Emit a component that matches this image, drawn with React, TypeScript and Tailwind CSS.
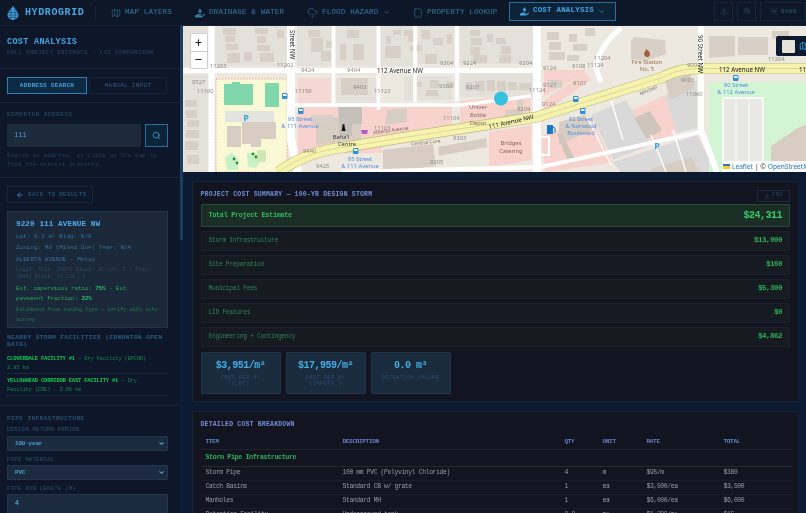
import type { ReactNode } from 'react';
import { ArrowLeft, ChevronDown, CloudDrizzle, Download, Map as MapIcon, Minus, Plus, Search, Sun, Tablet, ZoomIn } from 'lucide-react';
import { FaHandHoldingWater } from 'react-icons/fa';

const mono = 'font-["Liberation_Mono",monospace]';

function NavItem({ icon, label, chevron }: { icon: ReactNode; label: string; chevron?: boolean }) {
  return (
    <div className="flex items-center gap-[4px] text-[7.5px] tracking-[0.2px] text-[#367aa8]">
      {icon}
      <span>{label}</span>
      {chevron && <ChevronDown className="ml-[1px] size-[7px]" />}
    </div>
  );
}

function Header() {
  return (
    <header className="flex h-[26px] shrink-0 items-center bg-[#0d1727] border-b border-[#14233a]">
      <div className="flex w-[96px] shrink-0 items-center gap-[6px] pl-[7px] border-r border-[#14233a] h-[14px]">
        <svg viewBox="0 0 12 14" className="w-[12px] h-[14px]">
          <path d="M6 0 C8 3 11.5 6 11.5 9 A5.5 5 0 0 1 .5 9 C.5 6 4 3 6 0Z" fill="#3f9fdc" />
          <path d="M1 6.5H11M.5 9H11.5M1 11.5H11M4 3V14M8 3V14" stroke="#0d1727" strokeWidth=".4" />
        </svg>
        <span className="text-[10px] font-bold tracking-[0.6px] text-[#46a6e2]">HYDROGRID</span>
      </div>
      <div className="ml-[15px] w-[84px]"><NavItem icon={<MapIcon className="size-[10px]" strokeWidth={1.3} />} label="MAP LAYERS" /></div>
      <div className="w-[112px]"><NavItem icon={<FaHandHoldingWater className="size-[10px]" />} label="DRAINAGE & WATER" /></div>
      <div className="w-[106px]"><NavItem icon={<CloudDrizzle className="size-[11px]" strokeWidth={1.3} />} label="FLOOD HAZARD" chevron /></div>
      <div className="w-[96px]"><NavItem icon={<Tablet className="size-[10px]" strokeWidth={1.3} />} label="PROPERTY LOOKUP" /></div>
      <div className="flex h-[19px] w-[107px] items-center justify-center gap-[4px] border border-[#2a6f9e] bg-[#0d2338] text-[7.5px] font-bold tracking-[0.2px] text-[#46a6e2] mb-[3px]">
        <FaHandHoldingWater className="size-[9px]" />
        <span>COST ANALYSIS</span>
        <ChevronDown className="size-[7px]" />
      </div>
      <div className="ml-auto flex items-center gap-[4px] mb-[3px]">
        <div className="flex size-[19px] items-center justify-center border border-[#16253a] text-[#274a68]"><Download className="size-[8px]" /></div>
        <div className="flex size-[19px] items-center justify-center border border-[#16253a] text-[#274a68]"><ZoomIn className="size-[8px]" /></div>
        <div className="flex h-[19px] w-[46px] items-center gap-[3px] border border-[#16253a] pl-[9px] text-[6px] font-bold tracking-[0.4px] text-[#274a68]"><Sun className="size-[8px]" />DARK</div>
      </div>
    </header>
  );
}

function Label({ children, className = '' }: { children: ReactNode; className?: string }) {
  return <div className={`text-[5.8px] tracking-[0.15px] text-[#2a5070] ${className}`}>{children}</div>;
}

function Select({ value }: { value: string }) {
  return (
    <div className="flex h-[15px] items-center justify-between rounded-[1px] border border-[#22364d] bg-[#1b2a3e] pl-[7px] pr-[2px] text-[6px] tracking-[-0.2px] font-bold text-[#4a9fd8]">
      {value}
      <ChevronDown className="size-[7px]" strokeWidth={3.5} />
    </div>
  );
}

function Sidebar() {
  return (
    <aside className="flex w-[182.5px] shrink-0 bg-[#0d1729]">
      <div className="w-[180px] h-full overflow-hidden">
        <div className="h-[43px] border-b border-[#15263d] px-[7px] pt-[12px]">
          <div className="text-[8.5px] leading-[9px] font-bold tracking-[0.3px] text-[#46a6e2]">COST ANALYSIS</div>
          <div className="mt-[2px] text-[5.8px] leading-[7px] tracking-[0.38px] text-[#234668]">FULL PROJECT ESTIMATE · LID COMPARISON</div>
        </div>
        <div className="flex h-[34px] gap-[2px] border-b border-[#15263d] px-[7px] pt-[8px]">
          <div className="flex h-[17px] w-[80px] items-center justify-center border border-[#2f7fb2] bg-[#0d2a44] text-[6px] font-bold tracking-[0.28px] text-[#46a6e2]">ADDRESS SEARCH</div>
          <div className="flex h-[17px] w-[78px] items-center justify-center border border-[#14263c] text-[6px] tracking-[0.28px] text-[#2f5d84]">MANUAL INPUT</div>
        </div>
        <div className="h-[75px] border-b border-[#15263d] px-[7px] pt-[8px]">
          <Label className="h-[13px] leading-[7px] !text-[6px] !tracking-[0.5px]">EDMONTON ADDRESS</Label>
          <div className="flex gap-[4px]">
            <div className="flex h-[23px] w-[134px] items-center rounded-[1px] bg-[#1d2a3b] pl-[7px] text-[7px] text-[#4a9fd8]">111</div>
            <div className="flex h-[23px] w-[23px] items-center justify-center border border-[#2a6f9e] bg-[#0d2338] text-[#46a6e2]"><Search className="size-[9px]" /></div>
          </div>
          <div className="mt-[4px] text-[5.8px] leading-[9.4px] tracking-[0.18px] text-[#214260]">
            Search an address, or click on the map to<br />find the nearest property.
          </div>
        </div>
        <div className="pl-[7px] pr-[12px] pt-[8px]">
          <div className="flex h-[17px] w-[86px] items-center gap-[4px] border border-[#14263c] pl-[8px] text-[6px] tracking-[0.3px] text-[#2f5d84]">
            <ArrowLeft className="size-[8px] text-[#46a6e2]" />BACK TO RESULTS
          </div>
          <div className="mt-[8px] h-[117px] w-[161px] border border-[#22344b] bg-[#1b283a] pl-[8px] pr-[8px] pt-[7px]">
            <div className="text-[7.8px] leading-[10px] font-bold text-[#4dabe6]">9220 111 AVENUE NW</div>
            <div className="mt-[2px] text-[6px] leading-[11.4px] text-[#33719c]">
              <div>Lot: 6.2 m²  Bldg: N/A</div>
              <div>Zoning: MU (Mixed Use)  Year: N/A</div>
              <div>ALBERTA AVENUE · Métis</div>
            </div>
            <div className="mt-[2px] text-[5.5px] leading-[6.6px] tracking-[-0.16px] text-[#2f475f]">Legal: Plan: 2984J Block: 41 Lot: 5 / Plan:<br />2984J Block: 41 Lot: 6</div>
            <div className="mt-[4px] text-[6px] leading-[10px] tracking-[-0.16px] text-[#22a752]">
              Est. impervious ratio: <b className="text-[#27c45f]">75%</b> · Est.<br />pavement fraction: <b className="text-[#27c45f]">22%</b>
            </div>
            <div className="mt-[1px] text-[5.5px] leading-[9.4px] tracking-[-0.15px] text-[#1d7a42]">Estimated from zoning type — verify with site<br />survey</div>
          </div>
          <div className="mt-[6px] text-[6.2px] leading-[7.4px] font-bold tracking-[0.38px] text-[#2a5a85]">NEARBY STORM FACILITIES (EDMONTON OPEN<br />DATA)</div>
          <div className="mt-[5px] h-[20px] border-b border-[#15263d] text-[5.6px] leading-[9px] tracking-[-0.27px] text-[#13864a]">
            <b className="text-[#12c74f]">CLOVERDALE FACILITY #1</b> — Dry Facility (EPCOR) ·<br />2.85 km
          </div>
          <div className="mt-[2px] h-[20px] border-b border-[#15263d] text-[5.6px] leading-[9px] tracking-[-0.27px] text-[#13864a]">
            <b className="text-[#12c74f]">YELLOWHEAD CORRIDOR EAST FACILITY #1</b> — Dry<br />Facility (COE) · 3.66 km
          </div>
        </div>
        <div className="mt-[9px] border-t border-[#15263d] pl-[7px] pr-[12px] pt-[9px]">
          <div className="text-[6.2px] leading-[7px] tracking-[0.37px] text-[#2a5070] font-bold">PIPE INFRASTRUCTURE</div>
          <Label className="mt-[4px] h-[10px] leading-[7px]">DESIGN RETURN PERIOD</Label>
          <Select value="100-year" />
          <Label className="mt-[5px] h-[9px] leading-[7px]">PIPE MATERIAL</Label>
          <Select value="PVC" />
          <Label className="mt-[5px] h-[9px] leading-[7px]">PIPE RUN LENGTH (M)</Label>
          <div className="flex h-[21px] items-center rounded-[1px] border border-[#22364d] bg-[#1b2a3e] pl-[7px] text-[6.5px] font-bold text-[#4a9fd8]">4</div>
        </div>
      </div>
      <div className="relative w-[2.5px] bg-[#101e33]">
        <div className="h-[214px] bg-[#1b3d5e]" />
      </div>
    </aside>
  );
}

const greys = 'fill-[#e4e1db]';

const buildings: [number, number, number, number][] = [
  [184, 100, 12, 7], [185, 110, 11, 8], [186, 120, 12, 7], [185, 130, 13, 8], [184, 141, 13, 9], [186, 155, 12, 9],
  [222, 28, 13, 7], [224, 36, 10, 6], [225, 44, 12, 6], [226, 53, 13, 10], [243, 52, 8, 9],
  [254, 28, 13, 6], [256, 36, 9, 7], [256, 45, 13, 6], [259, 53, 14, 9], [276, 30, 7, 8],
  [307, 30, 12, 7], [310, 38, 12, 14], [320, 51, 10, 10], [325, 41, 6, 7], [339, 44, 6, 16], [352, 44, 11, 16], [346, 30, 12, 8],
  [385, 36, 5, 8], [384, 46, 16, 12], [403, 30, 10, 6], [407, 35, 7, 7], [409, 45, 12, 6], [392, 30, 8, 5],
  [469, 30, 10, 6], [470, 38, 11, 7], [469, 47, 10, 8], [472, 55, 14, 8], [486, 34, 6, 8], [495, 38, 10, 6], [500, 46, 10, 8], [498, 55, 12, 8],
  [420, 30, 9, 9], [432, 38, 10, 7], [424, 54, 12, 10], [446, 34, 5, 10],
  [546, 32, 12, 8], [548, 42, 12, 8], [548, 52, 16, 8], [568, 34, 8, 8], [572, 44, 14, 7], [584, 28, 10, 8], [566, 55, 12, 6],
  [310, 115, 22, 10], [340, 78, 27, 17], [429, 80, 9, 8], [415, 82, 6, 5], [425, 90, 12, 6], [445, 82, 8, 6],
  [464, 82, 8, 9], [474, 81, 10, 10], [486, 80, 8, 11], [496, 81, 9, 10], [507, 82, 9, 8], [518, 83, 12, 7], [516, 100, 6, 16],
  [547, 80, 14, 8],
];

const labels: [number, number, string][] = [
  [209, 68, '11203'], [276, 67, '11202'], [300, 72, '9424'], [346, 72, '9404'], [191, 84, '9527'], [196, 93, '11160'], [294, 93, '11159'],
  [352, 89, '9403'], [373, 93, '11123'], [373, 130, '11103'], [302, 153, '9440'], [315, 168, '9425'], [439, 65, '9304'], [462, 65, '9224'], [518, 65, '9204'],
  [438, 88, '9303'], [465, 89, '9207'], [528, 92, '11124'], [442, 120, '11104'], [516, 111, '9204'], [542, 70, '9124'], [571, 68, '9108'], [586, 67, '11124'], [593, 60, '11204'],
  [542, 87, '9127'], [572, 85, '9107'], [541, 106, '9124'], [452, 140, '9303'], [429, 164, '9305'], [686, 67, '9004'], [680, 82, '9003'], [685, 96, '11060'], [767, 61, '11204'],
];

const road111 = 'M277 172C295 160 315 150 345 147L400 138L536 117L660 78C672 72 680 69 700 68.500H806';

function StopIcon({ x, y }: { x: number; y: number }) {
  return (
    <g>
      <rect x={x} y={y} width="5.5" height="6" rx="1" fill="#2d8fd8" />
      <rect x={x + 1} y={y + 1} width="3.5" height="2" fill="#fff" />
    </g>
  );
}

function BlueText({ x, y, lines }: { x: number; y: number; lines: string[] }) {
  return (
    <text fontSize="5.8" fill="#4d8fe6" textAnchor="middle">
      {lines.map((l, i) => <tspan key={l} x={x} y={y + i * 7}>{l}</tspan>)}
    </text>
  );
}

function MapPanel() {
  return (
    <div className="relative h-[146px] shrink-0 overflow-hidden bg-[#efece5]">
      <svg viewBox="182 26 624 146" className="block h-[146px] w-[624px]" style={{ fontFamily: '"Noto Sans", sans-serif' }}>
        <rect x="182" y="26" width="624" height="146" fill="#ede9e1" />
        {/* residential blocks */}
        <rect x="182" y="26" width="25" height="41" className={greys} />
        <rect x="182" y="75" width="25" height="97" className={greys} />
        <rect x="214" y="26" width="72" height="40" className={greys} />
        <rect x="296" y="26" width="34" height="40" className={greys} />
        <rect x="335" y="26" width="40" height="40" className={greys} />
        <rect x="380" y="26" width="32" height="40" className={greys} />
        <rect x="417" y="26" width="36" height="38" className={greys} />
        <rect x="459" y="26" width="73" height="38" className={greys} />
        <rect x="459" y="73" width="73" height="24" className={greys} />
        <rect x="403" y="76" width="48" height="24" className={greys} />
        {/* commercial */}
        <rect x="297" y="78" width="33" height="26" fill="#f5d7d3" />
        <rect x="335" y="78" width="40" height="26" fill="#e5e2dc" />
        <rect x="297" y="107" width="84" height="46" fill="#f8d3cd" />
        <polygon points="381,107 403,107 403,142 381,147" fill="#f8d3cd" />
        <polygon points="403,107 451,102 451,135 403,143" fill="#f8d3cd" />
        <polygon points="459,101 530,94 530,117 459,128" fill="#f8d3cd" />
        <polygon points="543,100 585,73 590,80 543,113" fill="#f8d3cd" />
        <polygon points="543,70 584,70 584,74 543,96" fill="#f8d3cd" />
        <polygon points="488,132 530,125 530,160 488,168" fill="#f8d3cd" />
        <polygon points="540,136 590,118 612,163 545,172" fill="#f8d3cd" />
        <polygon points="626,113 664,95 676,133 650,142" fill="#f8d3cd" />
        <polygon points="590,115 625,100 650,145 612,160" fill="#d9d9d9" />
        <polygon points="664,95 696,80 696,128 676,133" fill="#d9d9d9" />
        <polygon points="612,162 696,135 715,172 620,172" fill="#d9d9d9" />
        <polygon points="382,145 488,130 488,168 382,172" fill="#eee9e0" />
        {/* school grounds */}
        <rect x="215" y="79" width="71" height="93" fill="#fbf8d6" stroke="#e58f8f" strokeWidth=".7" strokeDasharray="1.5 1.5" />
        <path d="M223 84h8v-2h8v2h13v21h-29z" fill="#7fd7ab" />
        <rect x="264" y="83" width="14" height="24" fill="#7fd7ab" />
        <rect x="224" y="111" width="49" height="11" fill="#e3e3e0" />
        <path d="M241 122h34v17h-15v8h-10v-3h-9zM226 126h14v21h-14z" fill="#d7cdc2" />
        <path d="M224 157l7-4 6 5v12h-11z" fill="#c6f2c6" />
        <path d="M246 153l8 0 6 7-5 8-8-1z" fill="#c6f2c6" />
        <rect x="256" y="150" width="9" height="12" fill="#cfe9b4" />
        <g fill="#2f8a3a"><circle cx="233" cy="159" r="1.4" /><circle cx="236" cy="163" r="1.4" /><circle cx="252" cy="154" r="1.4" /><circle cx="255" cy="157" r="1.4" /></g>
        {/* park */}
        <rect x="708" y="82" width="98" height="90" fill="#d3f5d3" />
        <rect x="722" y="98" width="40" height="74" fill="#e8e8e4" stroke="#fff" strokeWidth="1.4" />
        <path d="M735 98v74M748 98v74" stroke="#fff" strokeWidth=".9" />
        <path d="M770 172v-26l25-17 11-5v48z" fill="#d7cdc2" />
        {/* buildings */}
        {buildings.map(([x, y, w, h]) => <rect key={`${x}-${y}`} x={x} y={y} width={w} height={h} fill="#d8cfc6" />)}
        <path d="M630 40l4-3 30 3 1 14-20 7-15-2z" fill="#d8cfc6" />
        <path d="M708 36l26 0v20l-26 2zM737 37l30 0v18l-30 0z" fill="#d8cfc6" />
        <path d="M771 31l17 0v8h-17z" fill="#d8cfc6" />
        <path d="M345 107h12v6h3v26l-45 6v-20h12v-8h18z" fill="#d7cdc2" />
        <path d="M337 107h24v17h-10v12h-12z" fill="#c4c0ba" />
        <path d="M386 110l20-2v14l-22 3z" fill="#d7cdc2" />
        <path d="M505 110l10-1 8 6v8l-15 2-6-5z" fill="#d7cdc2" />
        <path d="M437 147l48-9 1 9-48 9zM382 150l50-6 3 22-53 6z" fill="#d7cdc2" />
        <path d="M558 122l28-8 7 15-35 16z" fill="#d7cdc2" />
        <path d="M633 118l16-7 12 19-15 9z" fill="#cfc5bb" />
        <path d="M650 169l40-12 9 15h-49z" fill="#d7cdc2" />
        <path d="M664 80l24-12 5 20-24 12z" fill="#d7cdc2" />
        <path d="M556 134l5 0 14 27-7 3z" fill="#cfc5bb" />
        {/* streets */}
        <g stroke="#fff" fill="none">
          <path d="M182 70.5H540" strokeWidth="5" />
          <path d="M210.500 26V172" strokeWidth="6" />
          <path d="M290 26V140L297 172" strokeWidth="8" />
          <path d="M332.500 26V104M377.500 26V110M414 26V102M456 26V101" strokeWidth="3.500" />
          <path d="M294 105H460L530 96" strokeWidth="3.500" />
          <path d="M536 26V172" strokeWidth="8" />
          <path d="M620 28C605 40 596 55 595 68L600 82" strokeWidth="5" />
          <path d="M700 26V130L716 172" strokeWidth="6" />
          <path d="M340 172L540 167L700 132" strokeWidth="4" />
          <path d="M610 100L622 140M585 115L610 165M650 135L665 172M672 130L685 172" strokeWidth="1.400" />
          <path d="M540 155H548V137H540" strokeWidth="2" />
        </g>
        {/* 111 / 112 avenue */}
        <g fill="none">
          <path d={road111} stroke="#bdb977" strokeWidth="11" />
          <path d={road111} stroke="#f6f3ae" strokeWidth="9.800" />
          <path d={road111} stroke="#c9c58b" strokeWidth=".6" />
        </g>
        <path d="M700 26V66" stroke="#fff" strokeWidth="6" />
        {/* labels */}
        <g fontSize="5.800" fill="#8a8a85">
          {labels.map(([x, y, t]) => <text key={`${x}${t}`} x={x} y={y}>{t}</text>)}
        </g>
        <g fontSize="6.200" fill="#222">
          <text x="376" y="73">112 Avenue NW</text>
          <text x="718" y="72">112 Avenue NW</text>
          <text x="798" y="72">11</text>
          <text x="0" y="0" transform="translate(488 129) rotate(-13)">111 Avenue NW</text>
          <text x="0" y="0" transform="translate(289 30) rotate(90)">Street NW</text>
          <text x="0" y="0" transform="translate(697 35) rotate(90)">90 Street NW</text>
        </g>
        <g fontSize="5.800" fill="#7d6a5a" textAnchor="middle">
          <text x="646" y="64" fill="#a0704a">Fire Station</text>
          <text x="646" y="71" fill="#a0704a">No. 5</text>
          <text x="340" y="139" fill="#3b3b3b">Baha'i</text>
          <text x="346" y="146" fill="#3b3b3b">Centre</text>
          <text x="477" y="109">Univer</text>
          <text x="477" y="117">Bottle</text>
          <text x="477" y="125">Depot</text>
          <text x="510" y="145">Bridges</text>
          <text x="510" y="153">Catering</text>
          <text x="0" y="0" fontSize="5" transform="translate(390 132) rotate(-8)">Alberta Avenue</text>
          <text x="0" y="0" fontSize="5" transform="translate(425 144) rotate(-6)">Central Core</text>
          <text x="0" y="0" fontSize="5" transform="translate(648 92) rotate(-22)">Mitchell</text>
        </g>
        <BlueText x={299} y={121} lines={['95 Street', '& 111 Avenue']} />
        <BlueText x={359} y={161} lines={['95 Street', '& 111 Avenue']} />
        <BlueText x={580} y={121} lines={['92 Street', '& Norwood', 'Boulevard']} />
        <BlueText x={735} y={87} lines={['90 Street', '& 112 Avenue']} />
        <StopIcon x={281} y={93} />
        <StopIcon x={297} y={108} />
        <StopIcon x={352} y={148} />
        <StopIcon x={572} y={96} />
        <StopIcon x={579} y={108} />
        <StopIcon x={732} y={75} />
        <text x="245" y="121" fontSize="9" fontWeight="700" fill="#3e9fdb" textAnchor="middle">P</text>
        <text x="656" y="149" fontSize="9" fontWeight="700" fill="#3e9fdb" textAnchor="middle">P</text>
        <path d="M546 125h6v9h-6z" fill="#1578c8" />
        <path d="M552 127l2 1v5" stroke="#1578c8" fill="none" />
        <path d="M340.500 131l1-5a1.200 1.200 0 1 1 2 0l1 5z" fill="#111" />
        <path d="M643 53c1-2 2-3 2-4 2 1 4 3 4 5s-1 3-3 3-3-2-3-4z" fill="#a0623a" />
        <path d="M360 130h7l-1 4h-5z" fill="#b45bc4" />
        <circle cx="500" cy="98.500" r="7" fill="#35c2de" />
      </svg>
      <div className="absolute left-[7px] top-[7px] flex h-[36px] w-[18px] flex-col rounded-[1px] border border-[#cfcfcf] bg-white text-[#222]">
        <div className="flex flex-1 items-center justify-center border-b border-[#ccc]"><Plus className="size-[9px]" strokeWidth={3} /></div>
        <div className="flex flex-1 items-center justify-center"><Minus className="size-[9px]" strokeWidth={3} /></div>
      </div>
      <div className="absolute right-0 top-[10px] flex h-[20px] w-[30px] items-center gap-[4px] overflow-hidden rounded-l-[2px] bg-[#0e1b2e] pl-[6px]">
        <div className="size-[13px] shrink-0 rounded-[1px] bg-[#e7e2d6]" />
        <MapIcon className="size-[10px] shrink-0 text-[#3f9fdc]" />
      </div>
      <div className="absolute bottom-0 right-0 flex h-[11px] w-[84px] items-center gap-[2px] overflow-hidden whitespace-nowrap bg-white/85 pl-[1px] text-[6.6px] text-[#333] font-['Noto_Sans',sans-serif]">
        <span className="h-[5px] w-[7px] shrink-0 bg-[linear-gradient(#3b6fc4_50%,#f5d020_50%)]" />
        <span className="text-[#2a7bc4]">Leaflet</span> | © <span className="text-[#2a7bc4]">OpenStreetMap</span>
      </div>
    </div>
  );
}

function CostRow({ label, value }: { label: string; value: string }) {
  return (
    <div className="flex h-[20px] items-center justify-between rounded-[1px] border border-[#1a2129] bg-[#161b22] px-[7px] text-[6.3px] tracking-[-0.31px] text-[#2f8350]">
      {label}
      <b className="text-[7.5px] tracking-[-0.5px] text-[#2bb058]">{value}</b>
    </div>
  );
}

function Stat({ value, label }: { value: string; label: ReactNode }) {
  return (
    <div className="flex h-[42px] flex-col items-center rounded-[1px] border border-[#21354a] bg-[#1b2b3e] pt-[7px] text-center w-[80px]">
      <b className="text-[10px] tracking-[-0.5px] leading-[12px] text-[#45aee6]">{value}</b>
      <div className="mt-[3px] text-[5.2px] leading-[6.400px] tracking-[0.5px] text-[#294f72]">{label}</div>
    </div>
  );
}

const rows = [
  ['Storm Pipe', '100 mm PVC (Polyvinyl Chloride)', '4', 'm', '$95/m', '$380'],
  ['Catch Basins', 'Standard CB w/ grate', '1', 'ea', '$3,500/ea', '$3,500'],
  ['Manholes', 'Standard MH', '1', 'ea', '$6,000/ea', '$6,000'],
  ['Detention Facility', 'Underground tank', '0.0', 'm³', '$1,200/m³', '$15'],
];

function Breakdown() {
  return (
    <section className="mt-[9px] ml-[9px] mr-[7px] border border-[#17253a] bg-[#12151f] pl-[8px] pr-[8px] pt-[9px] h-[120px]">
      <div className="text-[6.5px] leading-[7px] font-bold tracking-[0.19px] text-[#728cd4]">DETAILED COST BREAKDOWN</div>
      <table className="mt-[7px] w-[591px] table-fixed text-[6.4px] tracking-[-0.37px] text-[#939caa]">
        <colgroup>
          <col className="w-[137px]" />
          <col className="w-[222px]" />
          <col className="w-[38px]" />
          <col className="w-[44px]" />
          <col className="w-[77px]" />
          <col className="w-[73px]" />
        </colgroup>
        <thead>
          <tr className="h-[14px] border-b border-[#20242f] text-left text-[6px] tracking-[-0.3px] text-[#647fca]">
            {['ITEM', 'DESCRIPTION', 'QTY', 'UNIT', 'RATE', 'TOTAL'].map((h) => <th key={h} className="pl-[5px] font-bold">{h}</th>)}
          </tr>
        </thead>
        <tbody>
          <tr className="h-[17px] border-b border-[#1b3029]">
            <td colSpan={6} className="pl-[5px] text-[6.6px] tracking-[-0.33px] font-bold text-[#2fb25b]">Storm Pipe Infrastructure</td>
          </tr>
          {rows.map((r) => (
            <tr key={r[0]} className="h-[14px] border-b border-[#191d27]">
              {r.map((c, i) => <td key={i} className="pl-[5px]">{c}</td>)}
            </tr>
          ))}
        </tbody>
      </table>
    </section>
  );
}

export default function App() {
  return (
    <div className={`flex h-[513px] w-[806px] flex-col overflow-hidden bg-[#0b1a30] blur-[0.35px] ${mono}`}>
      <Header />
      <div className="flex min-h-0 flex-1">
        <Sidebar />
        <main className="flex min-w-0 flex-1 flex-col overflow-hidden">
          <MapPanel />
          <section className="mt-[9px] ml-[9px] mr-[7px] h-[221px] shrink-0 border border-[#17253a] bg-[#12151f] px-[8px] pt-[8px]">
            <div className="flex h-[14px] items-start justify-between">
              <div className="mt-[1px] text-[6.5px] leading-[8px] font-bold tracking-[0.19px] text-[#728cd4]">PROJECT COST SUMMARY — 100-YR DESIGN STORM</div>
              <div className="flex h-[12px] w-[33px] items-center justify-center gap-[2px] border border-[#1b2a3d] text-[5.2px] tracking-[0.5px] text-[#294f72]"><Download className="size-[6px]" />CSV</div>
            </div>
            <div className="flex h-[23px] items-center justify-between rounded-[1px] border border-[#274a38] bg-[#1b2e26] px-[7px] text-[6.8px] tracking-[-0.29px] font-bold text-[#2fbd5c]">
              Total Project Estimate
              <span className="text-[10px] tracking-[-0.5px] text-[#38cc69]">$24,311</span>
            </div>
            <div className="mt-[4px] flex flex-col gap-[4px]">
              <CostRow label="Storm Infrastructure" value="$13,900" />
              <CostRow label="Site Preparation" value="$160" />
              <CostRow label="Municipal Fees" value="$5,300" />
              <CostRow label="LID Features" value="$0" />
              <CostRow label="Engineering + Contingency" value="$4,862" />
            </div>
            <div className="mt-[5px] flex gap-[5px]">
              <Stat value="$3,951/m²" label={<>COST PER M²<br />(LOT)</>} />
              <Stat value="$17,959/m²" label={<>COST PER M²<br />(IMPERV.)</>} />
              <Stat value="0.0 m³" label="DETENTION VOLUME" />
            </div>
          </section>
          <Breakdown />
        </main>
      </div>
    </div>
  );
}
